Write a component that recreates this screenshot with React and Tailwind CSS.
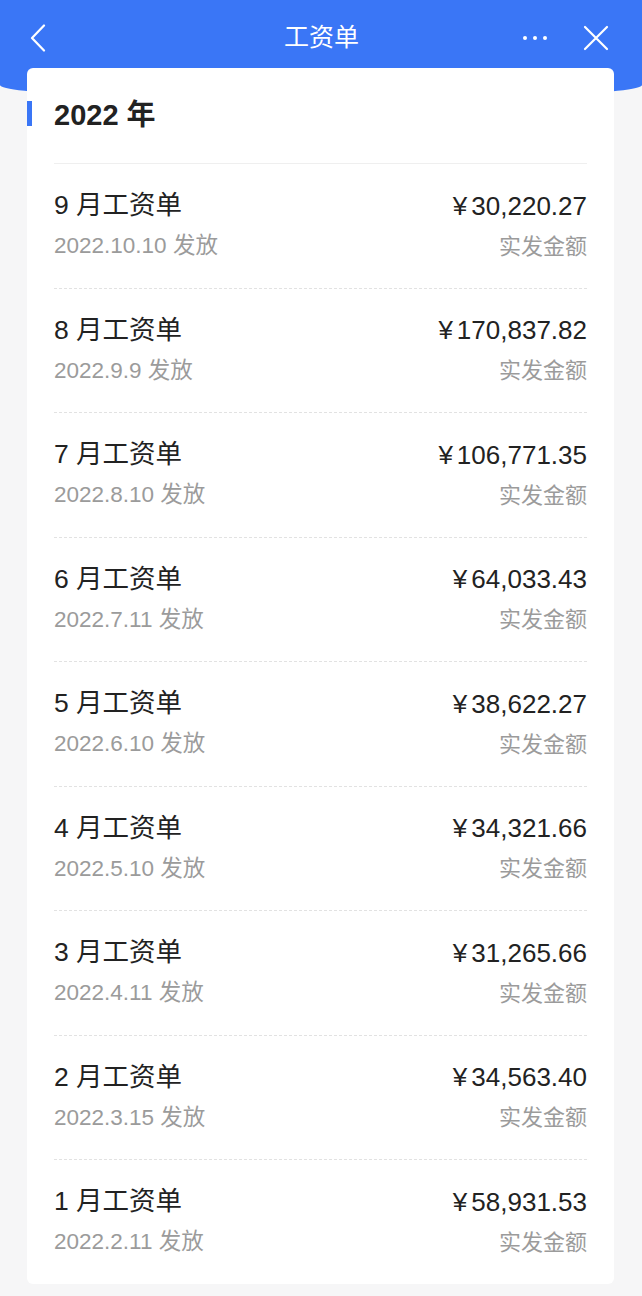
const slips = [
  { month: 9, date: '2022.10.10', amount: '30,220.27' },
  { month: 8, date: '2022.9.9', amount: '170,837.82' },
  { month: 7, date: '2022.8.10', amount: '106,771.35' },
  { month: 6, date: '2022.7.11', amount: '64,033.43' },
  { month: 5, date: '2022.6.10', amount: '38,622.27' },
  { month: 4, date: '2022.5.10', amount: '34,321.66' },
  { month: 3, date: '2022.4.11', amount: '31,265.66' },
  { month: 2, date: '2022.3.15', amount: '34,563.40' },
  { month: 1, date: '2022.2.11', amount: '58,931.53' },
];

function SlipRow({ slip, last }) {
  return (
    <div className={`pt-[26px] pb-[26.5px] ${last ? '' : 'border-b border-dashed border-[#e2e2e2]'}`}>
      <div className="flex items-center justify-between h-[32px]">
        <span className="text-[26.5px] text-[#222]">{slip.month} 月工资单</span>
        <span className="text-[26px] text-[#222]">
          <span className="mr-[4px]">¥</span>
          {slip.amount}
        </span>
      </div>
      <div className="flex items-center justify-between h-[30px] mt-[9px]">
        <span className="text-[22.5px] text-[#9b9b9b]">{slip.date} 发放</span>
        <span className="text-[22px] text-[#9b9b9b]">实发金额</span>
      </div>
    </div>
  );
}

export default function App() {
  return (
    <div
      className="relative min-h-[1296px] bg-[#f6f6f7] overflow-hidden"
      style={{ fontFamily: '"Liberation Sans", "Noto Sans CJK SC", sans-serif' }}
    >
      {/* blue curved backdrop */}
      <div className="absolute top-0 left-0 right-0 h-[100px] bg-[#3a76f6] rounded-b-[50%_15px]" />

      <div className="relative">
        {/* nav bar */}
        <div className="flex items-center justify-between h-[68px] pt-[8px] pl-[30px] pr-[33px] text-white">
          <svg width="16" height="28" viewBox="0 0 16 28" fill="none">
            <path d="M14 1.5 L2 14 L14 26.5" stroke="white" strokeWidth="2.2" strokeLinecap="round" strokeLinejoin="round" />
          </svg>
          <span className="text-[25px] pl-[74px]">工资单</span>
          <div className="flex items-center gap-[36px]">
            <div className="flex gap-[6px]">
              <span className="w-[4px] h-[4px] rounded-full bg-white" />
              <span className="w-[4px] h-[4px] rounded-full bg-white" />
              <span className="w-[4px] h-[4px] rounded-full bg-white" />
            </div>
            <svg width="26" height="26" viewBox="0 0 26 26" fill="none">
              <path d="M2 2 L24 24 M24 2 L2 24" stroke="white" strokeWidth="2.2" strokeLinecap="round" />
            </svg>
          </div>
        </div>

        {/* card */}
        <div className="ml-[27px] mr-[28px] bg-white rounded-[6px] pt-[28px]">
          <div className="flex items-center h-[40px]">
            <span className="w-[5px] h-[25px] bg-[#3a76f6] -mt-[5px]" />
            <span className="ml-[22px] text-[29px] font-bold text-[#222]">2022 年</span>
          </div>
          <div className="mx-[27px] mt-[27px] border-t border-[#efefef]">
            {slips.map((s, i) => (
              <SlipRow key={s.month} slip={s} last={i === slips.length - 1} />
            ))}
          </div>
        </div>
      </div>
    </div>
  );
}
